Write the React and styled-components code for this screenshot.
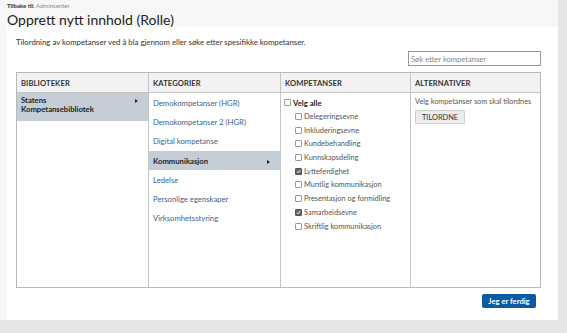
import React from 'react';
import styled, { createGlobalStyle } from 'styled-components';

const GlobalStyle = createGlobalStyle`
  html, body {
    margin: 0;
    padding: 0;
    background: #f7f7f7;
    font-family: Lato, "Liberation Sans", sans-serif;
  }
`;

const Page = styled.div`
  display: flex;
  flex-direction: column;
  width: 567px;
  height: 333px;
  overflow: hidden;
`;

const Top = styled.div`
  display: flex;
  flex: 1;
`;

const Main = styled.div`
  width: 551px;
  padding-left: 7px;
  display: flex;
  flex-direction: column;
`;

const Gutter = styled.div`
  flex: 1;
  background: #e6e6e6;
`;

const BottomStrip = styled.div`
  height: 13px;
  background: #e6e6e6;
`;

const Crumb = styled.div`
  height: 11px;
  padding-top: 3px;
  font-size: 6px;
  line-height: 6px;
  color: #888;
  b {
    color: #333;
    font-weight: 700;
  }
`;

const Title = styled.h1`
  margin: 0;
  height: 13px;
  font-size: 14px;
  line-height: 12px;
  font-weight: 400;
  color: #222;
`;

const Panel = styled.div`
  background: #fff;
  height: 283px;
  padding: 10px 17px 0 9px;
  display: flex;
  flex-direction: column;
`;

const Intro = styled.p`
  margin: 0;
  font-size: 7.8px;
  line-height: 10px;
  color: #333;
`;

const SearchRow = styled.div`
  display: flex;
  justify-content: flex-end;
  margin-top: 4px;
`;

const SearchInput = styled.input`
  box-sizing: border-box;
  width: 133px;
  height: 15px;
  border: 1px solid #999;
  padding: 0 2px;
  font-family: inherit;
  font-size: 7.6px;
  outline: none;
  &::placeholder {
    color: #888;
  }
`;

const Table = styled.div`
  margin-top: 6px;
  display: grid;
  grid-template-columns: 131px 132px 130px 1fr;
  grid-template-rows: 20px 194px;
  border: 1px solid #b9b9b9;
`;

const HeadCell = styled.div`
  background: #f2f2f2;
  border-bottom: 1px solid #c4c4c4;
  border-left: ${p => (p.$first ? 'none' : '1px solid #c4c4c4')};
  padding-left: 4px;
  display: flex;
  align-items: center;
  font-size: 7.6px;
  font-weight: 700;
  color: #333;
  letter-spacing: 0.1px;
`;

const Col = styled.div`
  border-left: ${p => (p.$first ? 'none' : '1px solid #c4c4c4')};
  display: flex;
  flex-direction: column;
`;

const LibItem = styled.div`
  background: #c5ced6;
  height: 28px;
  padding: 3px 4px 0 4px;
  box-sizing: border-box;
  display: flex;
  justify-content: space-between;
  font-size: 7.7px;
  line-height: 9px;
  font-weight: 700;
  color: #222;
`;

const Arrow = styled.span`
  width: 0;
  height: 0;
  margin-top: 3px;
  margin-right: 6px;
  border-top: 2.5px solid transparent;
  border-bottom: 2.5px solid transparent;
  border-left: 3px solid #222;
`;

const CatItem = styled.div`
  height: 19.3px;
  padding: 0 4px;
  display: flex;
  align-items: center;
  justify-content: space-between;
  font-size: 7.7px;
  color: ${p => (p.$active ? '#222' : '#3d6488')};
  font-weight: ${p => (p.$active ? 700 : 400)};
  background: ${p => (p.$active ? '#c5ced6' : 'transparent')};
`;

const CheckList = styled.div`
  padding: 3px 0 0 3px;
  display: flex;
  flex-direction: column;
`;

const CheckRow = styled.label`
  height: 13.7px;
  display: flex;
  align-items: center;
  gap: 2px;
  padding-left: ${p => (p.$sub ? '11px' : '0')};
  font-size: ${p => (p.$sub ? '7.4px' : '7.7px')};
  color: ${p => (p.$sub ? '#555' : '#222')};
  font-weight: ${p => (p.$sub ? 400 : 700)};
`;

const Box = styled.span`
  box-sizing: border-box;
  width: 7px;
  height: 7px;
  border: 1px solid ${p => (p.$checked ? '#555' : '#999')};
  border-radius: 1px;
  background: ${p => (p.$checked ? '#666' : '#fff')};
  display: flex;
  align-items: center;
  justify-content: center;
`;

const AltBody = styled.div`
  padding: 4px 4px 0 4px;
  display: flex;
  flex-direction: column;
  align-items: flex-start;
  gap: 4px;
  font-size: 7.3px;
  color: #555;
  white-space: nowrap;
`;

const GrayButton = styled.button`
  height: 14px;
  padding: 0 6px;
  border: 1px solid #cfcfcf;
  background: #ececec;
  border-radius: 1px;
  font-family: inherit;
  font-size: 7.4px;
  color: #333;
`;

const Footer = styled.div`
  display: flex;
  justify-content: flex-end;
  padding: 6px 5px 0 0;
`;

const PrimaryButton = styled.button`
  height: 14px;
  width: 54px;
  padding: 0;
  border: none;
  border-radius: 2px;
  background: #0b5aa6;
  color: #fff;
  font-family: inherit;
  font-size: 7.6px;
  font-weight: 700;
`;

const Tick = () => (
  <svg width="5" height="5" viewBox="0 0 10 10">
    <path d="M2 5.2 L4.2 7.5 L8.2 2.5" fill="none" stroke="#fff" strokeWidth="2" />
  </svg>
);

const categories = [
  'Demokompetanser (HGR)',
  'Demokompetanser 2 (HGR)',
  'Digital kompetanse',
  'Kommunikasjon',
  'Ledelse',
  'Personlige egenskaper',
  'Virksomhetsstyring',
];

const skills = [
  ['Delegeringsevne', false],
  ['Inkluderingsevne', false],
  ['Kundebehandling', false],
  ['Kunnskapsdeling', false],
  ['Lytteferdighet', true],
  ['Muntlig kommunikasjon', false],
  ['Presentasjon og formidling', false],
  ['Samarbeidsevne', true],
  ['Skriftlig kommunikasjon', false],
];

export default function App() {
  return (
    <Page>
      <GlobalStyle />
      <Top>
        <Main>
          <Crumb>
            <b>Tilbake til:</b> Adminsenter
          </Crumb>
          <Title>Opprett nytt innhold (Rolle)</Title>
          <Panel>
            <Intro>
              Tilordning av kompetanser ved å bla gjennom eller søke etter spesifikke kompetanser.
            </Intro>
            <SearchRow>
              <SearchInput placeholder="Søk etter kompetanser" />
            </SearchRow>
            <Table>
              <HeadCell $first>BIBLIOTEKER</HeadCell>
              <HeadCell>KATEGORIER</HeadCell>
              <HeadCell>KOMPETANSER</HeadCell>
              <HeadCell>ALTERNATIVER</HeadCell>
              <Col $first>
                <LibItem>
                  <span>
                    Statens
                    <br />
                    Kompetansebibliotek
                  </span>
                  <Arrow />
                </LibItem>
              </Col>
              <Col>
                {categories.map(c => (
                  <CatItem key={c} $active={c === 'Kommunikasjon'}>
                    {c}
                    {c === 'Kommunikasjon' && <Arrow />}
                  </CatItem>
                ))}
              </Col>
              <Col>
                <CheckList>
                  <CheckRow>
                    <Box />
                    Velg alle
                  </CheckRow>
                  {skills.map(([name, checked]) => (
                    <CheckRow key={name} $sub>
                      <Box $checked={checked}>{checked && <Tick />}</Box>
                      {name}
                    </CheckRow>
                  ))}
                </CheckList>
              </Col>
              <Col>
                <AltBody>
                  Velg kompetanser som skal tilordnes
                  <GrayButton>TILORDNE</GrayButton>
                </AltBody>
              </Col>
            </Table>
            <Footer>
              <PrimaryButton>Jeg er ferdig</PrimaryButton>
            </Footer>
          </Panel>
        </Main>
        <Gutter />
      </Top>
      <BottomStrip />
    </Page>
  );
}
